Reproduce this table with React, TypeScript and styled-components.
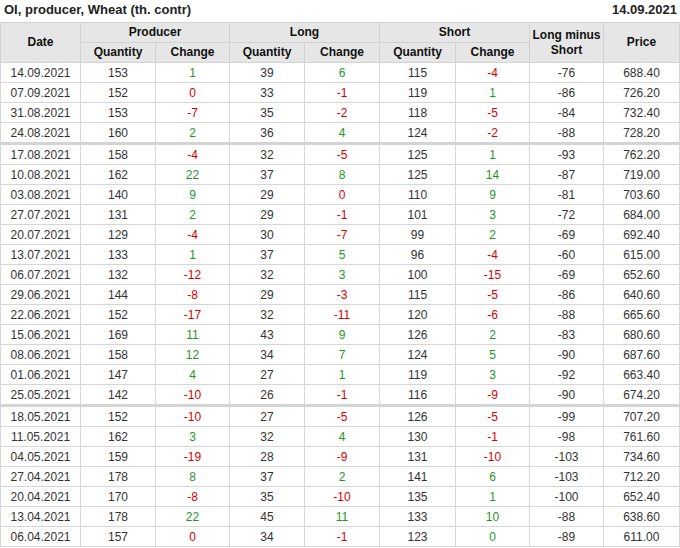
import React from "react"
import styled, { createGlobalStyle } from "styled-components"

const GlobalStyle = createGlobalStyle`
    body {
        margin: 0;
        background: #fff;
        font-family: "Liberation Sans", Arial, sans-serif;
    }
`

const Page = styled.div`
    width: 680px;
`

const TitleBar = styled.div`
    display: flex;
    justify-content: space-between;
    align-items: flex-start;
    height: 22px;
    padding: 1px 3px 0 4px;
    box-sizing: border-box;
    font-size: 13px;
    line-height: 17px;
    font-weight: bold;
    color: #222;
`

const Table = styled.table`
    width: 679px;
    border-collapse: collapse;
    table-layout: fixed;
    font-size: 12px;
`

const HeadCell = styled.th`
    background: #e6e6e6;
    border: 1px solid #d2d2d2;
    color: #111;
    font-weight: bold;
    height: 19px;
    padding: 0;
    text-align: center;
    line-height: 15px;
`

const Row = styled.tr<{ split?: boolean }>`
    td {
        border-top: ${({ split }) => split ? '3px solid #d4d4d4' : '1px solid #d6d6d6'};
    }
`

const Cell = styled.td<{ tone?: 'up' | 'down' }>`
    border: 1px solid #d6d6d6;
    height: 19px;
    padding: 0;
    text-align: center;
    color: ${({ tone }) => tone === 'up' ? '#1f961f' : tone === 'down' ? '#d40000' : '#333'};
`

type Line = [string, number, string, number, string, number, string, number, string, boolean?]

const data: Line[] = [
    ["14.09.2021", 153, "1", 39, "6", 115, "-4", -76, "688.40"],
    ["07.09.2021", 152, "-0", 33, "-1", 119, "1", -86, "726.20"],
    ["31.08.2021", 153, "-7", 35, "-2", 118, "-5", -84, "732.40"],
    ["24.08.2021", 160, "2", 36, "4", 124, "-2", -88, "728.20"],
    ["17.08.2021", 158, "-4", 32, "-5", 125, "1", -93, "762.20", true],
    ["10.08.2021", 162, "22", 37, "8", 125, "14", -87, "719.00"],
    ["03.08.2021", 140, "9", 29, "-0", 110, "9", -81, "703.60"],
    ["27.07.2021", 131, "2", 29, "-1", 101, "3", -72, "684.00"],
    ["20.07.2021", 129, "-4", 30, "-7", 99, "2", -69, "692.40"],
    ["13.07.2021", 133, "1", 37, "5", 96, "-4", -60, "615.00"],
    ["06.07.2021", 132, "-12", 32, "3", 100, "-15", -69, "652.60"],
    ["29.06.2021", 144, "-8", 29, "-3", 115, "-5", -86, "640.60"],
    ["22.06.2021", 152, "-17", 32, "-11", 120, "-6", -88, "665.60"],
    ["15.06.2021", 169, "11", 43, "9", 126, "2", -83, "680.60"],
    ["08.06.2021", 158, "12", 34, "7", 124, "5", -90, "687.60"],
    ["01.06.2021", 147, "4", 27, "1", 119, "3", -92, "663.40"],
    ["25.05.2021", 142, "-10", 26, "-1", 116, "-9", -90, "674.20"],
    ["18.05.2021", 152, "-10", 27, "-5", 126, "-5", -99, "707.20", true],
    ["11.05.2021", 162, "3", 32, "4", 130, "-1", -98, "761.60"],
    ["04.05.2021", 159, "-19", 28, "-9", 131, "-10", -103, "734.60"],
    ["27.04.2021", 178, "8", 37, "2", 141, "6", -103, "712.20"],
    ["20.04.2021", 170, "-8", 35, "-10", 135, "1", -100, "652.40"],
    ["13.04.2021", 178, "22", 45, "11", 133, "10", -88, "638.60"],
    ["06.04.2021", 157, "-0", 34, "-1", 123, "+0", -89, "611.00"],
]

// "-0" is a zero shown in red, "+0" a zero shown in green
const Change = ({ v }: { v: string }) => {
    const tone = v.startsWith('-') ? 'down' : 'up'
    const text = v === '-0' || v === '+0' ? '0' : v
    return <Cell tone={tone}>{text}</Cell>
}

const widths = [80, 75, 74, 75, 75, 76, 74, 74, 76]

const App: React.FunctionComponent = () => {
    return (
        <>
            <GlobalStyle />
            <Page>
                <TitleBar>
                    <span>OI, producer, Wheat (th. contr)</span>
                    <span>14.09.2021</span>
                </TitleBar>
                <Table>
                    <colgroup>
                        {widths.map((w, i) => <col key={i} style={{ width: w }} />)}
                    </colgroup>
                    <thead>
                        <tr>
                            <HeadCell rowSpan={2}>Date</HeadCell>
                            <HeadCell colSpan={2}>Producer</HeadCell>
                            <HeadCell colSpan={2}>Long</HeadCell>
                            <HeadCell colSpan={2}>Short</HeadCell>
                            <HeadCell rowSpan={2}>Long minus<br />Short</HeadCell>
                            <HeadCell rowSpan={2}>Price</HeadCell>
                        </tr>
                        <tr>
                            <HeadCell>Quantity</HeadCell>
                            <HeadCell>Change</HeadCell>
                            <HeadCell>Quantity</HeadCell>
                            <HeadCell>Change</HeadCell>
                            <HeadCell>Quantity</HeadCell>
                            <HeadCell>Change</HeadCell>
                        </tr>
                    </thead>
                    <tbody>
                        {data.map((r, index) => (
                            <Row key={index} split={r[9]}>
                                <Cell>{r[0]}</Cell>
                                <Cell>{r[1]}</Cell>
                                <Change v={r[2]} />
                                <Cell>{r[3]}</Cell>
                                <Change v={r[4]} />
                                <Cell>{r[5]}</Cell>
                                <Change v={r[6]} />
                                <Cell>{r[7]}</Cell>
                                <Cell>{r[8]}</Cell>
                            </Row>
                        ))}
                    </tbody>
                </Table>
            </Page>
        </>
    )
}

export default App
